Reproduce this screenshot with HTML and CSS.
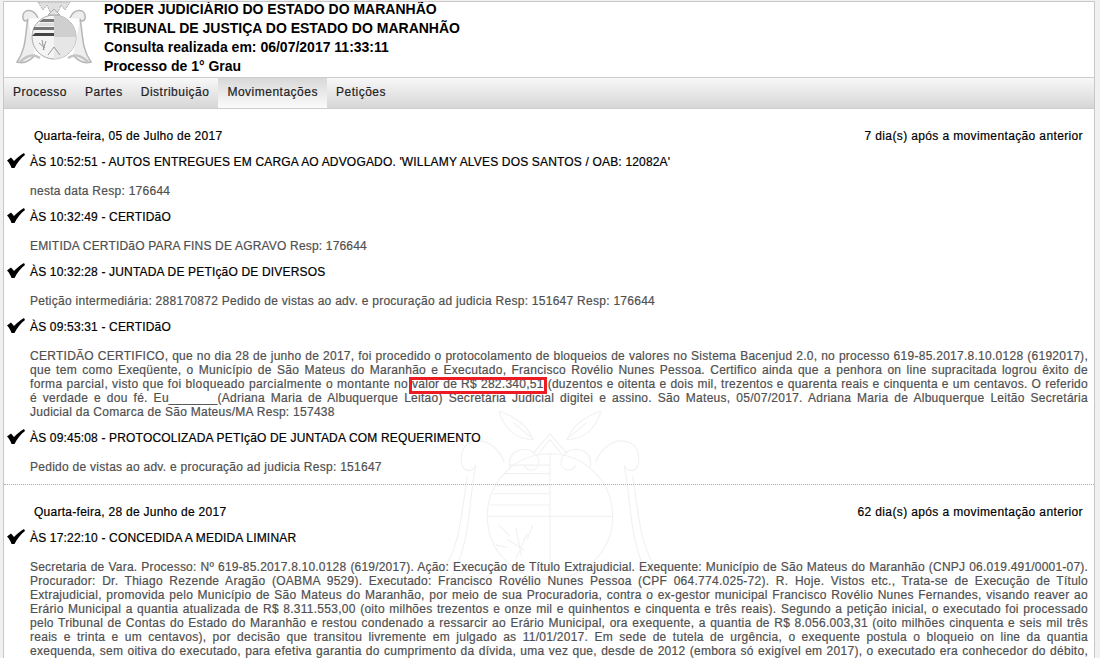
FILE: index.html
```html
<!DOCTYPE html>
<html lang="pt-BR">
<head>
    <meta charset="UTF-8">
    <title>Consulta de Processo</title>
    <link rel="stylesheet" href="styles.css">
</head>
<body>
    <svg class="defs" width="0" height="0">
        <defs>
            <symbol id="check" viewBox="0 0 18 15">
                <path d="M0 7.5 L4 4.5 L7 8 C10 5 13 2 17 0 L18 2 C14 5 10 10 7.5 15 L4.5 15 C3.5 12 2 9.5 0 7.5 Z"/>
            </symbol>
        </defs>
    </svg>
    <div class="page">
        <div class="header">
            <svg class="brasao" width="80" height="66" viewBox="0 2 80 66">
                <path d="M24 18 C20 8 10 9 9 15 C8 22 13 22 14 19 M14 19 C11 32 13 48 3 62 C10 64 16 61 21 55 M56 18 C60 8 70 9 71 15 C72 22 67 22 66 19 M66 19 C69 32 67 48 77 62 C70 64 64 61 59 55" fill="#eee" stroke="#b5b5b5" stroke-width="1.5"/>
                <path d="M6 62 C14 54 20 54 26 58 M74 62 C66 54 60 54 54 58" fill="none" stroke="#c4c4c4" stroke-width="2.5"/>
                <circle cx="40" cy="37" r="22" fill="#f4f4f4" stroke="#a8a8a8"/>
                <path d="M40 15 A22 22 0 0 1 62 37 H40 Z" fill="#cfcfcf"/>
                <path d="M40 37 H62 A22 22 0 0 1 40 59 Z" fill="#e6e6e6"/>
                <path d="M29 19 H40 V22 H25 Z M20 27 H40 V30 H19 Z" fill="#777"/>
                <path d="M21 33 H40 V36 H18 Z" fill="#444"/>
                <path d="M26 23 H40 V26 H22 Z" fill="#ddd"/>
                <path d="M25 43 L31 48 M28 40 L30 50 M32 41 L29 50 M46 55 L40 47 L34 55" fill="none" stroke="#999"/>
                <path d="M24 2 L29 10 L33 5 L36 12 H44 L47 5 L51 10 L56 2 Z" fill="#e0e0e0" stroke="#aaa" stroke-dasharray="2 1"/>
                <path d="M34 15 L40 9 L46 15 Z" fill="#e2e2e2" stroke="#aaa"/>
            </svg>
            <div class="header-text">
                <div>PODER JUDICIÁRIO DO ESTADO DO MARANHÃO</div>
                <div>TRIBUNAL DE JUSTIÇA DO ESTADO DO MARANHÃO</div>
                <div>Consulta realizada em: 06/07/2017 11:33:11</div>
                <div>Processo de 1° Grau</div>
            </div>
        </div>
        <div class="tabs">
            <a class="tab">Processo</a>
            <a class="tab">Partes</a>
            <a class="tab">Distribuição</a>
            <a class="tab active">Movimentações</a>
            <a class="tab">Petições</a>
        </div>
        <div class="content">
            <svg class="marca" width="228" height="188" viewBox="0 0 80 66">
                <g fill="none" stroke="#f1f1f1" stroke-width=".4">
                    <path d="M24 18 C20 8 10 9 9 15 C8 22 13 22 14 19 C11 32 13 48 3 62 C10 64 16 61 21 55 M56 18 C60 8 70 9 71 15 C72 22 67 22 66 19 C69 32 67 48 77 62 C70 64 64 61 59 55"/>
                    <path d="M11 23 C9 34 9 48 1 58 M69 23 C71 34 71 48 79 58"/>
                    <path d="M18 37 A22 22 0 1 0 62 37 A22 22 0 1 0 18 37 M40 15 V59 M18 37 H62 M26 19 H40 M24 22 H40 M21 26 H40 M20 29 H40 M19 33 H40"/>
                    <path d="M22 0 C24 6 28 10 34 10 C32 5 28 2 22 0 M58 0 C56 6 52 10 46 10 C48 5 52 2 58 0 M27 4 L33 9 M53 4 L47 9 M34 15 L40 8 L46 15 M36 15 L40 10 L44 15"/>
                    <path d="M26 20 C24 13 34 11 36 17 C37 21 32 22 31 19 M54 20 C56 13 46 11 44 17 C43 21 48 22 49 19"/>
                    <path d="M25 45 L31 49 M28 41 L30 51 M32 43 L28 52 M22 40 L26 44 M34 40 L32 45 M21 47 L25 48"/>
                </g>
            </svg>

            <div class="grupo">
                <div class="data-linha">
                    <span class="data">Quarta-feira, 05 de Julho de 2017</span>
                    <span class="dias">7 dia(s) após a movimentação anterior</span>
                </div>
                <div class="mov">
                    <div class="mov-titulo"><svg class="check"><use href="#check"/></svg>ÀS 10:52:51 - AUTOS ENTREGUES EM CARGA AO ADVOGADO. 'WILLAMY ALVES DOS SANTOS / OAB: 12082A'</div>
                    <p class="mov-texto">nesta data Resp: 176644</p>
                </div>
                <div class="mov">
                    <div class="mov-titulo"><svg class="check"><use href="#check"/></svg>ÀS 10:32:49 - CERTIDãO</div>
                    <p class="mov-texto caixa-alta">EMITIDA CERTIDãO PARA FINS DE AGRAVO Resp: 176644</p>
                </div>
                <div class="mov">
                    <div class="mov-titulo"><svg class="check"><use href="#check"/></svg>ÀS 10:32:28 - JUNTADA DE PETIçãO DE DIVERSOS</div>
                    <p class="mov-texto">Petição intermediária: 288170872 Pedido de vistas ao adv. e procuração ad judicia Resp: 151647 Resp: 176644</p>
                </div>
                <div class="mov">
                    <div class="mov-titulo"><svg class="check"><use href="#check"/></svg>ÀS 09:53:31 - CERTIDãO</div>
                    <p class="mov-texto">
                        <span class="linha">CERTIDÃO CERTIFICO, que no dia 28 de junho de 2017, foi procedido o protocolamento de bloqueios de valores no Sistema Bacenjud 2.0, no processo 619-85.2017.8.10.0128 (6192017),</span>
                        <span class="linha">que tem como Exeqüente, o Município de São Mateus do Maranhão e Executado, Francisco Rovélio Nunes Pessoa. Certifico ainda que a penhora on line supracitada logrou êxito de</span>
                        <span class="linha"><span class="largo">forma parcial, visto que foi bloqueado parcialmente o montante no</span> <span class="destaque">valor de R$ 282.340,51</span> (duzentos e oitenta e dois mil, trezentos e quarenta reais e cinquenta e um centavos. O referido</span>
                        <span class="linha">é verdade e dou fé. Eu_______(Adriana Maria de Albuquerque Leitão) Secretária Judicial digitei e assino. São Mateus, 05/07/2017. Adriana Maria de Albuquerque Leitão Secretária</span>
                        Judicial da Comarca de São Mateus/MA Resp: 157438
                    </p>
                </div>
                <div class="mov">
                    <div class="mov-titulo"><svg class="check"><use href="#check"/></svg>ÀS 09:45:08 - PROTOCOLIZADA PETIçãO DE JUNTADA COM REQUERIMENTO</div>
                    <p class="mov-texto">Pedido de vistas ao adv. e procuração ad judicia Resp: 151647</p>
                </div>
            </div>

            <div class="grupo">
                <div class="data-linha">
                    <span class="data">Quarta-feira, 28 de Junho de 2017</span>
                    <span class="dias">62 dia(s) após a movimentação anterior</span>
                </div>
                <div class="mov">
                    <div class="mov-titulo"><svg class="check"><use href="#check"/></svg>ÀS 17:22:10 - CONCEDIDA A MEDIDA LIMINAR</div>
                    <p class="mov-texto">
                        <span class="linha justa">Secretaria de Vara. Processo: Nº 619-85.2017.8.10.0128 (619/2017). Ação: Execução de Título Extrajudicial. Exequente: Município de São Mateus do Maranhão (CNPJ 06.019.491/0001-07).</span>
                        <span class="linha">Procurador: Dr. Thiago Rezende Aragão (OABMA 9529). Executado: Francisco Rovélio Nunes Pessoa (CPF 064.774.025-72). R. Hoje. Vistos etc., Trata-se de Execução de Título</span>
                        <span class="linha">Extrajudicial, promovida pelo Município de São Mateus do Maranhão, por meio de sua Procuradoria, contra o ex-gestor municipal Francisco Rovélio Nunes Fernandes, visando reaver ao</span>
                        <span class="linha">Erário Municipal a quantia atualizada de R$ 8.311.553,00 (oito milhões trezentos e onze mil e quinhentos e cinquenta e três reais). Segundo a petição inicial, o executado foi processado</span>
                        <span class="linha">pelo Tribunal de Contas do Estado do Maranhão e restou condenado a ressarcir ao Erário Municipal, ora exequente, a quantia de R$ 8.056.003,31 (oito milhões cinquenta e seis mil três</span>
                        <span class="linha">reais e trinta e um centavos), por decisão que transitou livremente em julgado as 11/01/2017. Em sede de tutela de urgência, o exequente postula o bloqueio on line da quantia</span>
                        <span class="linha">exequenda, sem oitiva do executado, para efetiva garantia do cumprimento da dívida, uma vez que, desde de 2012 (embora só exigível em 2017), o executado era conhecedor do débito,</span>
                    </p>
                </div>
            </div>
        </div>
    </div>
</body>
</html>
```
FILE: styles.css
```css
html, body {
    margin: 0;
    padding: 0;
    height: 658px;
    overflow: hidden;
    background: #f0f0f0;
}
body {
    font-family: "Liberation Sans", Arial, sans-serif;
    font-size: 12px;
    color: #000;
}
.defs {
    position: absolute;
}
.page {
    margin-left: 3px;
    margin-top: 1px;
    width: 1092px;
    height: 658px;
    overflow: hidden;
    background: #fff;
    border: 1px solid #c8c8c8;
    border-bottom: 0;
    box-sizing: border-box;
}
.header {
    display: flex;
    height: 75px;
    overflow: hidden;
}
.brasao {
    margin-left: 10px;
    flex: none;
}
.header-text {
    margin-left: 10px;
    margin-top: -2px;
    font-size: 14px;
    font-weight: bold;
    line-height: 19px;
}
.tabs {
    display: flex;
    height: 30px;
    background: linear-gradient(#f8f8f8, #d6d6d6);
    border-top: 1px solid #ccc;
    border-bottom: 1px solid #ccc;
}
.tab {
    padding: 0 9px;
    line-height: 28px;
    letter-spacing: .5px;
    color: #222;
    -webkit-text-stroke: .2px #222;
}
.tab.active {
    background: linear-gradient(#d8d8d8, #fbfbfb);
}
.content {
    position: relative;
}
.marca {
    position: absolute;
    left: 432px;
    top: 302px;
}
.grupo {
    position: relative;
    border-bottom: 1px dotted #aaa;
    padding-bottom: 10px;
}
.data-linha {
    display: flex;
    justify-content: space-between;
    padding: 20px 11px 0 30px;
    line-height: 14px;
    letter-spacing: .27px;
    -webkit-text-stroke: .2px #000;
}
.dias {
    letter-spacing: .37px;
}
.mov-titulo {
    display: flex;
    align-items: center;
    height: 20px;
    margin-top: 10px;
    padding-bottom: 2px;
    box-sizing: border-box;
    letter-spacing: .17px;
    -webkit-text-stroke: .2px #000;
}
.check {
    flex: none;
    width: 18px;
    height: 15px;
    margin: 0 5px 4px 3px;
}
.mov-texto {
    margin: 11px 6px 0 26px;
    line-height: 14px;
    color: #505050;
    letter-spacing: .27px;
    text-align: justify;
    -webkit-text-stroke: .2px #505050;
}
.mov-texto.caixa-alta {
    letter-spacing: .18px;
}
.linha {
    display: block;
    text-align-last: justify;
}
.justa {
    letter-spacing: .2px;
}
.largo {
    letter-spacing: .36px;
}
.destaque {
    position: relative;
}
.destaque::after {
    content: "";
    position: absolute;
    left: -3px;
    right: -3px;
    top: 0;
    height: 11px;
    border: 3px solid #ed1c24;
}
```
